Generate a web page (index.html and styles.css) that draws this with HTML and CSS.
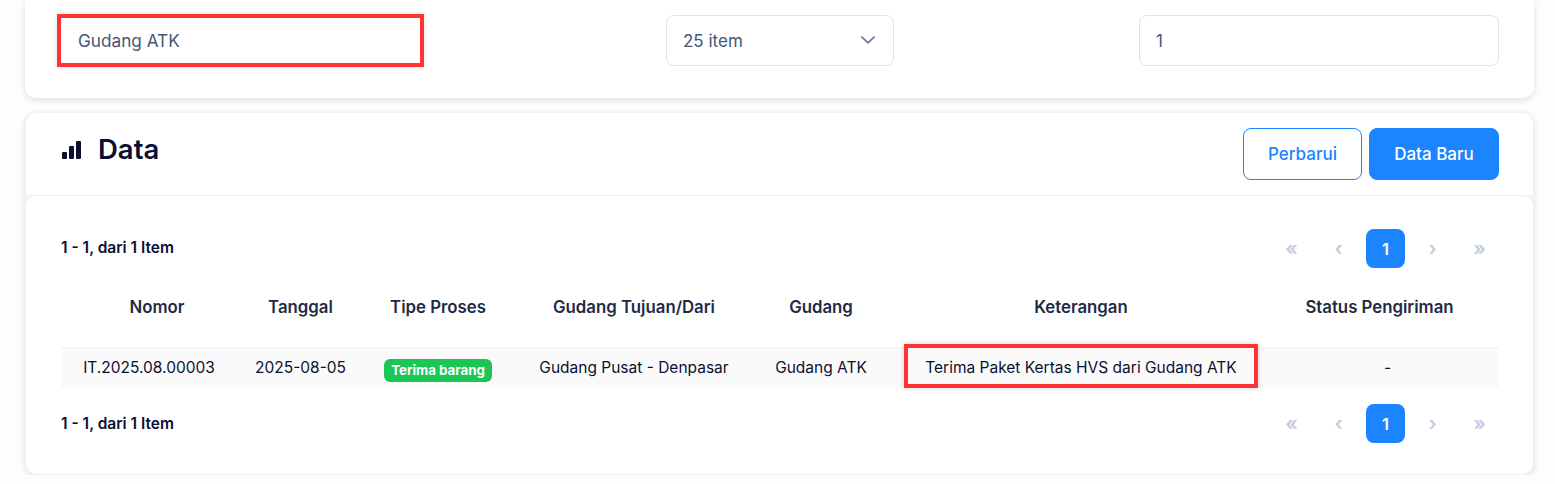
FILE: index.html
```html
<!DOCTYPE html>
<html lang="id">
<head>
    <meta charset="UTF-8">
    <meta name="viewport" content="width=device-width, initial-scale=1.0">
    <link rel="stylesheet" href="styles.css">
    <title>Data</title>
</head>
<body>

    <section class="card filter-card">
        <div class="field field-search marked">Gudang ATK</div>
        <div class="field field-select">
            <span>25 item</span>
            <svg class="chevron" width="14" height="8" viewBox="0 0 14 8" fill="none" stroke="#6f7a9c" stroke-width="1.8" stroke-linecap="round" stroke-linejoin="round"><path d="M1 1.2l6 5.6 6-5.6"/></svg>
        </div>
        <div class="field field-page">1</div>
    </section>

    <section class="card data-card">
        <div class="data-head">
            <h2 class="data-title">
                <svg class="title-icon" width="19" height="18" viewBox="0 0 19 18" fill="#0b1030"><rect x="0" y="11" width="5" height="7" rx="1"/><rect x="7" y="5" width="5" height="13" rx="1"/><rect x="14" y="0" width="5" height="18" rx="1"/></svg>
                <span>Data</span>
            </h2>
            <div class="data-actions">
                <button type="button" class="btn btn-outline">Perbarui</button>
                <button type="button" class="btn btn-primary">Data Baru</button>
            </div>
        </div>

        <div class="data-body">
            <div class="pager-row">
                <span class="pager-info">1 - 1, dari 1 Item</span>
                <div class="pager">
                    <span class="page-btn">«</span>
                    <span class="page-btn">‹</span>
                    <span class="page-btn active">1</span>
                    <span class="page-btn">›</span>
                    <span class="page-btn">»</span>
                </div>
            </div>

            <table class="data-table">
                <colgroup>
                    <col class="col-nomor">
                    <col class="col-tanggal">
                    <col class="col-tipe">
                    <col class="col-tujuan">
                    <col class="col-gudang">
                    <col class="col-ket">
                    <col class="col-status">
                </colgroup>
                <thead>
                    <tr>
                        <th class="th-nomor">Nomor</th>
                        <th>Tanggal</th>
                        <th>Tipe Proses</th>
                        <th>Gudang Tujuan/Dari</th>
                        <th>Gudang</th>
                        <th>Keterangan</th>
                        <th class="th-status">Status Pengiriman</th>
                    </tr>
                </thead>
                <tbody>
                    <tr>
                        <td>IT.2025.08.00003</td>
                        <td>2025-08-05</td>
                        <td><span class="badge">Terima barang</span></td>
                        <td>Gudang Pusat - Denpasar</td>
                        <td>Gudang ATK</td>
                        <td class="cell-marked"><span class="mark-box"></span>Terima Paket Kertas HVS dari Gudang ATK</td>
                        <td>-</td>
                    </tr>
                </tbody>
            </table>

            <div class="pager-row pager-bottom">
                <span class="pager-info">1 - 1, dari 1 Item</span>
                <div class="pager">
                    <span class="page-btn">«</span>
                    <span class="page-btn">‹</span>
                    <span class="page-btn active">1</span>
                    <span class="page-btn">›</span>
                    <span class="page-btn">»</span>
                </div>
            </div>
        </div>
    </section>

</body>
</html>
```

FILE: styles.css
```css
body {
    margin: 0;
    padding: 0 21px 0 25px;
    background-color: #fdfdfd;
    font-family: Inter, "Noto Sans", sans-serif;
    font-size: 15.5px;
    color: #0b1030;
    overflow: hidden;
}

.card {
    background-color: #ffffff;
    border-radius: 11px;
    box-shadow: 0 2px 6px rgba(0, 0, 0, 0.12);
}

/* Filter */
.filter-card {
    height: 98px;
    box-sizing: border-box;
    padding: 15px 35px 0 36px;
    border-radius: 0 0 11px 11px;
    display: flex;
    justify-content: space-between;
    align-items: flex-start;
}

.field {
    height: 51px;
    box-sizing: border-box;
    padding: 0 16px;
    border: 1px solid #e2e2ec;
    border-radius: 8px;
    display: flex;
    align-items: center;
    color: #465578;
    font-size: 17px;
}

.field-search {
    width: 359px;
    margin-right: 1px;
    padding: 0 17px;
    font-size: 17.2px;
}

.field-select {
    width: 228px;
    justify-content: space-between;
}

.field-page {
    width: 360px;
}

.chevron {
    margin-top: -2px;
    margin-right: 2px;
}

.marked {
    height: 45px;
    margin-top: 3px;
    border: 0;
    border-radius: 0;
    outline: 4px solid #ff3333;
    box-shadow: 0 0 4px 5px rgba(0, 0, 0, 0.1);
}

/* Data */
.data-card {
    margin-top: 14px;
    height: 363px;
    border: 1px solid #f1f1f1;
    box-sizing: border-box;
    background-color: #f4f4f4;
}

.data-head {
    height: 83px;
    box-sizing: border-box;
    padding: 15px 34px 0 35px;
    background-color: #ffffff;
    border-bottom: 1px solid #f0f0f0;
    border-radius: 11px 11px 0 0;
    display: flex;
    justify-content: space-between;
    align-items: flex-start;
}

.data-title {
    margin: 6px 0 0 1px;
    display: flex;
    align-items: center;
    gap: 17px;
    font-size: 27.5px;
    font-weight: 600;
    line-height: 30px;
}

.title-icon {
    margin-top: 2px;
}

.data-actions {
    display: flex;
    gap: 7px;
}

.btn {
    height: 52px;
    border-radius: 8px;
    font-family: inherit;
    font-size: 17px;
    font-weight: 500;
    cursor: pointer;
}

.btn-outline {
    width: 119px;
    background-color: #ffffff;
    border: 1px solid #1d84ff;
    color: #1d84ff;
}

.btn-primary {
    width: 130px;
    background-color: #1d84ff;
    border: 1px solid #1d84ff;
    color: #ffffff;
}

.data-body {
    height: 278px;
    box-sizing: border-box;
    padding: 33px 34px 0 35px;
    background-color: #ffffff;
    border-radius: 11px;
}

.pager-row {
    display: flex;
    justify-content: space-between;
    align-items: center;
}

.pager-bottom {
    margin-top: 16px;
}

.pager-info {
    margin-top: -3px;
    font-size: 15.5px;
    font-weight: 600;
}

.pager-bottom .pager-info {
    margin-top: -1px;
}

.pager {
    display: flex;
    gap: 8px;
}

.page-btn {
    width: 39px;
    height: 39px;
    border-radius: 8px;
    display: flex;
    align-items: center;
    justify-content: center;
    color: #c5cde0;
    font-size: 19px;
    font-weight: 700;
}

.page-btn.active {
    background-color: #1d84ff;
    color: #ffffff;
    font-size: 16.5px;
    font-weight: 600;
}

.data-table {
    width: 100%;
    table-layout: fixed;
    border-collapse: collapse;
}

.col-nomor { width: 176px; }
.col-tanggal { width: 127px; }
.col-tipe { width: 148px; }
.col-tujuan { width: 244px; }
.col-gudang { width: 130px; }
.col-ket { width: 390px; }

.data-table th {
    height: 79px;
    padding: 0 0 1px;
    box-sizing: border-box;
    font-size: 16.8px;
    font-weight: 600;
    color: #1f2a44;
    text-align: center;
}

.data-table .th-nomor {
    padding-left: 16px;
}

.data-table .th-status {
    padding-right: 16px;
}

.data-table td {
    height: 41px;
    box-sizing: border-box;
    padding: 0 0 1px;
    background-color: #fafafa;
    border-top: 1px solid #f0f0f0;
    text-align: center;
    white-space: nowrap;
}

.cell-marked {
    position: relative;
}

.mark-box {
    position: absolute;
    top: -4px;
    bottom: 0;
    left: 18px;
    right: 18px;
    border: 4px solid #ff3333;
    box-shadow: 0 0 4px 1px rgba(0, 0, 0, 0.12);
}

.badge {
    display: inline-block;
    vertical-align: -8px;
    padding: 0 7.5px;
    height: 23px;
    line-height: 23px;
    border-radius: 6px;
    background-color: #1cc655;
    color: #ffffff;
    font-size: 13.3px;
    font-weight: 700;
}
```
